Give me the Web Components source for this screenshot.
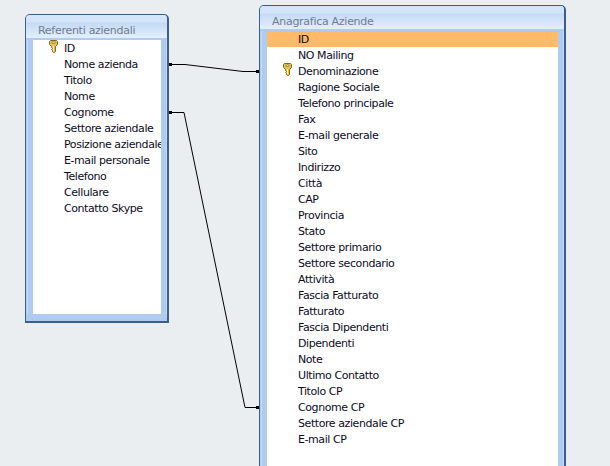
<!DOCTYPE html>
<html>
<head>
<meta charset="utf-8">
<style>
  html, body { margin: 0; height: 100%; overflow: hidden; }
  body { background: #ebeef1; font-family: "DejaVu Sans", sans-serif; }
  #canvas { position: relative; width: 610px; height: 466px; overflow: hidden; }
  table-window { position: absolute; }
  #referenti { left: 25px; top: 14px; width: 144px; height: 309px; --title-h: 25px; }
  #anagrafica { left: 259px; top: 5px; width: 307px; height: 480px; --title-h: 25px; }
  relation-lines { position: absolute; inset: 0; }
</style>
</head>
<body>
<template id="window-tpl">
  <style>
    :host { display: block; box-sizing: border-box; }
    .frame {
      box-sizing: border-box; height: 100%; display: flex; flex-direction: column;
      border: 1px solid #3b5f8c; border-width: 1px 2px 2px 1px;
      border-radius: 5px 5px 0 0; background: #afcbf1; overflow: hidden;
    }
    .title {
      box-sizing: border-box; height: var(--title-h, 25px); flex: none; padding: 8px 0 0 12px;
      background: linear-gradient(#d6e5f9 0, #d3e3f8 7px, #c5daf6 8px, #e3effd 100%);
      border-bottom: 2px solid #afcbf1;
      color: #6f7c8e; font-size: 11px; line-height: 15px; letter-spacing: -.28px; white-space: nowrap;
    }
    .body {
      flex: 1; min-height: 0; margin: 0 6px 7px 7px; background: #fff; overflow: hidden;
      box-shadow: 5px 0 0 #afcbf1, 6px 0 0 #c8dbf6, -5px 0 0 #afcbf1, -6px 0 0 #c8dbf6;
    }
  </style>
  <div class="frame">
    <div class="title"></div>
    <div class="body"><slot></slot></div>
  </div>
</template>

<template id="field-tpl">
  <style>
    :host { display: flex; align-items: center; box-sizing: border-box; height: 16px; white-space: nowrap; overflow: hidden;
      color: #0b0b25; font-size: 11px; letter-spacing: -.42px; }
    :host([selected]) { background: #ffba69; }
    .key { flex: none; width: 31px; height: 16px; display: flex; justify-content: flex-end; padding-right: 6px; box-sizing: border-box; }
    svg { display: block; visibility: hidden; }
    :host([pk]) svg { visibility: visible; }
  </style>
  <span class="key">
    <svg width="9" height="13" viewBox="0 0 9 13">
      <path d="M1.5.5h6l1 1v3l-2 2v5l-1 1h-1l-1-1v-1l-1-1 1-1-1-1v-1l-2-2v-3z" fill="#e7c24f" stroke="#7d6a22" stroke-width="1" stroke-linejoin="round"/>
      <rect x="3" y="2" width="3" height="1.6" fill="#fff6c9" stroke="#7d6a22" stroke-width=".6"/>
      <path d="M4.5 6v5" stroke="#fff3b8" stroke-width="1"/>
    </svg>
  </span>
  <span><slot></slot></span>
</template>

<template id="lines-tpl">
  <style>
    :host { display: block; pointer-events: none; }
    svg { display: block; }
  </style>
  <svg width="610" height="466" viewBox="0 0 610 466" fill="none" stroke="#000" stroke-width="1">
    <path d="M169 64.5H185L243 71.5H259"/>
    <path d="M169 112.5H184L245 407.5H259"/>
    <g fill="#000" stroke="none">
      <rect x="169" y="63" width="3" height="3"/>
      <rect x="169" y="111" width="3" height="3"/>
      <rect x="256" y="70" width="3" height="3"/>
      <rect x="256" y="406" width="3" height="3"/>
    </g>
  </svg>
</template>

<script>
  class TableWindow extends HTMLElement {
    constructor() {
      super();
      this.attachShadow({ mode: "open" });
      this.shadowRoot.appendChild(document.getElementById("window-tpl").content.cloneNode(true));
    }
    connectedCallback() {
      this.shadowRoot.querySelector(".title").textContent = this.getAttribute("caption") || "";
    }
  }
  class TableField extends HTMLElement {
    constructor() {
      super();
      this.attachShadow({ mode: "open" });
      this.shadowRoot.appendChild(document.getElementById("field-tpl").content.cloneNode(true));
    }
  }
  class RelationLines extends HTMLElement {
    constructor() {
      super();
      this.attachShadow({ mode: "open" });
      this.shadowRoot.appendChild(document.getElementById("lines-tpl").content.cloneNode(true));
    }
  }
  customElements.define("table-window", TableWindow);
  customElements.define("table-field", TableField);
  customElements.define("relation-lines", RelationLines);
</script>

<div id="canvas">
  <table-window id="referenti" caption="Referenti aziendali">
    <table-field pk>ID</table-field>
    <table-field>Nome azienda</table-field>
    <table-field>Titolo</table-field>
    <table-field>Nome</table-field>
    <table-field>Cognome</table-field>
    <table-field>Settore aziendale</table-field>
    <table-field>Posizione aziendale</table-field>
    <table-field>E-mail personale</table-field>
    <table-field>Telefono</table-field>
    <table-field>Cellulare</table-field>
    <table-field>Contatto Skype</table-field>
  </table-window>

  <table-window id="anagrafica" caption="Anagrafica Aziende">
    <table-field selected>ID</table-field>
    <table-field>NO Mailing</table-field>
    <table-field pk>Denominazione</table-field>
    <table-field>Ragione Sociale</table-field>
    <table-field>Telefono principale</table-field>
    <table-field>Fax</table-field>
    <table-field>E-mail generale</table-field>
    <table-field>Sito</table-field>
    <table-field>Indirizzo</table-field>
    <table-field>Città</table-field>
    <table-field>CAP</table-field>
    <table-field>Provincia</table-field>
    <table-field>Stato</table-field>
    <table-field>Settore primario</table-field>
    <table-field>Settore secondario</table-field>
    <table-field>Attività</table-field>
    <table-field>Fascia Fatturato</table-field>
    <table-field>Fatturato</table-field>
    <table-field>Fascia Dipendenti</table-field>
    <table-field>Dipendenti</table-field>
    <table-field>Note</table-field>
    <table-field>Ultimo Contatto</table-field>
    <table-field>Titolo CP</table-field>
    <table-field>Cognome CP</table-field>
    <table-field>Settore aziendale CP</table-field>
    <table-field>E-mail CP</table-field>
  </table-window>

  <relation-lines></relation-lines>
</div>
</body>
</html>
